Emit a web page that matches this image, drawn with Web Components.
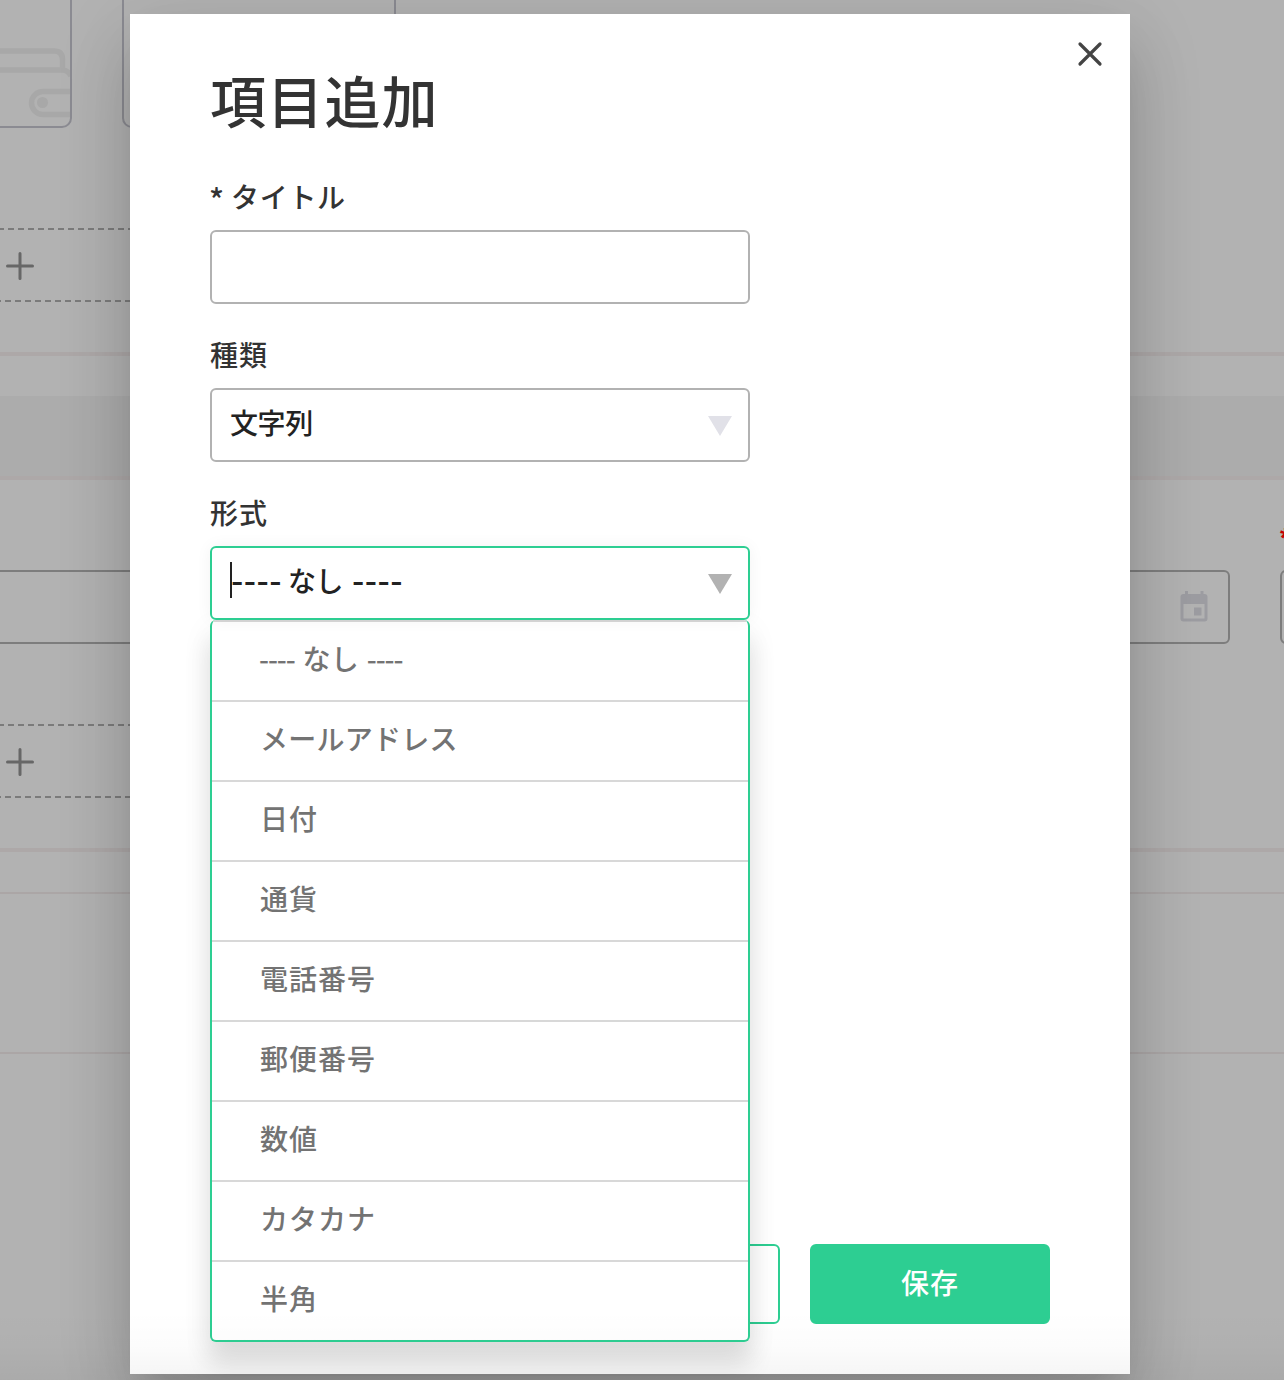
<!DOCTYPE html>
<html lang="ja">
<head>
<meta charset="utf-8">
<title>項目追加</title>
<style>
html,body{margin:0;height:1380px;overflow:hidden;background:#b2b2b2}
body{font-family:"Noto Sans CJK JP","Noto Sans",sans-serif;font-weight:500;position:relative}
.dash{font-family:"Liberation Sans",sans-serif;font-size:37px;letter-spacing:.45px;margin-top:1px}
</style>
</head>
<body>
<record-page></record-page>
<item-dialog heading="項目追加">
  <form-field label="タイトル" required></form-field>
  <form-field label="種類" arrow="#e1e1e8">文字列</form-field>
  <form-field label="形式" arrow="#b2b2b2" focused>
    <span class="dash" style="margin-left:-1px">----</span><span style="margin:0 9px 0 6px;letter-spacing:-.6px">なし</span><span class="dash">----</span>
    <option-menu slot="menu">
      <menu-option><span style="letter-spacing:-1.1px;margin-left:-1px">----</span><span style="margin:0 8px;letter-spacing:.1px">なし</span><span style="letter-spacing:-1.1px">----</span></menu-option>
      <menu-option><span style="letter-spacing:.25px">メールアドレス</span></menu-option>
      <menu-option>日付</menu-option>
      <menu-option>通貨</menu-option>
      <menu-option>電話番号</menu-option>
      <menu-option>郵便番号</menu-option>
      <menu-option>数値</menu-option>
      <menu-option>カタカナ</menu-option>
      <menu-option>半角</menu-option>
    </option-menu>
  </form-field>
  <action-button slot="actions" outlined></action-button>
  <action-button slot="actions">保存</action-button>
</item-dialog>
<bottom-shade></bottom-shade>
<script>
function define(name, html, setup) {
  const t = document.createElement('template');
  t.innerHTML = html;
  customElements.define(name, class extends HTMLElement {
    connectedCallback() {
      if (this.shadowRoot) return;
      this.attachShadow({mode: 'open'}).append(t.content.cloneNode(true));
      if (setup) setup(this, this.shadowRoot);
    }
  });
}

define('add-row', `<style>
:host{display:flex;align-items:center;width:200px;height:74px;box-sizing:border-box;padding:2px 0 0 6px;
background:repeating-linear-gradient(90deg,#7b7b7b 0 6px,transparent 6px 10px) -2px 0/110% 2px no-repeat,
repeating-linear-gradient(90deg,#7b7b7b 0 6px,transparent 6px 10px) -5px 100%/110% 2px no-repeat}
</style><svg width="28" height="28" viewBox="0 0 28 28" fill="none" stroke="#676767" stroke-width="3" stroke-linecap="round"><path d="M14 1.500v25M1.500 14h25"/></svg>`);

define('record-page', `<style>
:host{display:flex;flex-direction:column;height:1380px;width:1284px;overflow:hidden}
.cards{display:flex;height:128px;gap:50px;margin-bottom:100px;margin-left:-20px}
.card{box-sizing:border-box;border:2px solid #8b8b92;border-top:0;border-radius:0 0 10px 10px;overflow:hidden;display:flex;justify-content:flex-end}
.a{width:92px}.b{width:274px}
svg{display:block;flex:none}
.gap{height:50px}
.rule{height:4px;background:#ada8a8}
.thin{height:2px;background:#aba6a6}
.inputs{display:flex;height:74px;gap:50px;margin-left:-20px}
.box{box-sizing:border-box;flex:none;border:2px solid #7d7d7d;border-radius:6px;display:flex;align-items:center;justify-content:flex-end;padding-right:18px}
.star{height:90px;display:flex;justify-content:flex-end;box-sizing:border-box;padding-top:40px;color:#c80000;font:700 28px/36px "Liberation Sans",sans-serif;overflow:hidden}
.star span{width:4px;overflow:visible}
</style>
<div class="cards"><div class="card a"><svg width="70" height="126" viewBox="0 0 70 126" fill="none" stroke="#a8a8a8" stroke-width="5.500"><path d="M0 51h54q8.500 0 8.500 8.500V70M0 70h62q6 0 9 6M80 91.500H43a11.500 11.500 0 0 0 0 23H80"/><circle cx="42.500" cy="102.500" r="5.500" fill="#a8a8a8" stroke="none"/></svg></div><div class="card b"></div></div>
<add-row></add-row><div class="gap"></div>
<div class="rule"></div><div style="height:40px"></div>
<div style="height:80px;background:#acacac"></div><div class="rule"></div>
<div class="star"><span>*</span></div>
<div class="inputs"><div class="box" style="width:1250px"><svg width="32" height="34" viewBox="0 0 32 34"><path d="M2.500 7v21.500q0 3 3 3h21q3 0 3-3V7q0-3-3-3H25.500V1h-3v3H10V1H7v3H5.500q-3 0-3 3zm3 7h21v14.500h-21z" fill="#9c9ca1" fill-rule="evenodd"/><path d="M16 17.500h7.500v8H16z" fill="#9c9ca1"/></svg></div><div class="box" style="width:300px"></div></div>
<div style="height:80px"></div><add-row></add-row><div class="gap"></div>
<div class="rule"></div><div style="height:40px"></div><div class="thin"></div><div style="height:158px"></div><div class="thin"></div>`);

define('item-dialog', `<style>
:host{position:absolute;left:130px;top:14px;width:1000px;height:1360px;box-sizing:border-box;background:#fff;padding:0 80px 50px;display:flex;flex-direction:column;
box-shadow:0 22px 30px -14px rgba(0,0,0,.05),0 40px 60px rgba(0,0,0,.15),0 14px 76px rgba(0,0,0,.1)}
.top{display:flex;justify-content:flex-end;height:56px;padding-top:24px;box-sizing:border-box;margin-right:-56px}
h1{margin:-11px 0 0;font-size:56px;line-height:80px;font-weight:500;letter-spacing:1.2px;color:#333;height:101px}
.actions{margin-top:auto;display:flex;justify-content:flex-end;gap:30px}
</style>
<div class="top"><svg width="32" height="32" viewBox="0 0 32 32" stroke="#444" stroke-width="3.200" stroke-linecap="round"><path d="M6 6l20 20M26 6L6 26"/></svg></div>
<h1></h1><slot></slot><div class="actions"><slot name="actions"></slot></div>`,
(el, root) => root.querySelector('h1').textContent = el.getAttribute('heading'));

define('form-field', `<style>
:host{display:block;width:540px;height:158px;position:relative}
label{display:flex;height:70px;font-size:28px;line-height:72px;letter-spacing:1px;color:#333}
:host([required]) label{letter-spacing:.7px}
.mark{width:22px;margin-left:-1px;padding-top:3px;height:67px;font-size:31px}
.box{height:74px;box-sizing:border-box;border:2px solid #b2b2b2;border-radius:6px;display:flex;align-items:center;justify-content:space-between;padding:0 16px 0 18px;background:#fff}
.value{display:flex;font-size:28px;line-height:36px;color:#222;margin-top:-6px;letter-spacing:-.4px}
:host([focused]) .box{border-color:#2dce92;position:relative;z-index:3;box-shadow:0 0 16px rgba(0,0,0,.05)}
:host([focused]) .value{border-left:2px solid #222;height:36px}
svg{margin-top:2px}
</style><label></label><div class="box"><div class="value"><slot></slot></div></div><slot name="menu"></slot>`,
(el, root) => {
  const label = root.querySelector('label');
  label.innerHTML = (el.hasAttribute('required') ? '<span class="mark">*</span>' : '') + '<span></span>';
  label.lastChild.textContent = el.getAttribute('label');
  if (el.hasAttribute('arrow'))
    root.querySelector('.box').insertAdjacentHTML('beforeend', `<svg width="24" height="20"><path d="M0 0h24L12 20z" fill="${el.getAttribute('arrow')}"/></svg>`);
});

define('option-menu', `<style>
:host{position:absolute;z-index:2;left:0;top:144px;width:540px;height:722px;box-sizing:border-box;border:2px solid #2dce92;border-top:0;border-radius:6px;background:#fff;
box-shadow:0 24px 24px 2px rgba(0,0,0,.09),0 10px 30px 2px rgba(0,0,0,.06);display:flex;flex-direction:column;overflow:hidden}
</style><slot></slot>`);

define('menu-option', `<style>
:host{display:flex;align-items:center;box-sizing:border-box;height:80px;border-top:2px solid #d8d8d8;padding:0 48px 6px;font-size:28px;letter-spacing:1px;color:#737373}
</style><slot></slot>`);

define('action-button', `<style>
:host{display:flex;align-items:center;justify-content:center;width:240px;height:80px;box-sizing:border-box;border:2px solid #2dce92;border-radius:6px;background:#2dce92;color:#fff;font-size:28px;letter-spacing:1px;padding-bottom:5px}
:host([outlined]){background:#fff;color:#2dce92}
</style><slot></slot>`);

define('bottom-shade', `<style>
:host{position:absolute;left:0;bottom:0;width:100%;height:70px;z-index:5;background:linear-gradient(transparent,rgba(0,0,0,.012) 50%,rgba(0,0,0,.045))}
</style>`);
</script>
</body>
</html>
